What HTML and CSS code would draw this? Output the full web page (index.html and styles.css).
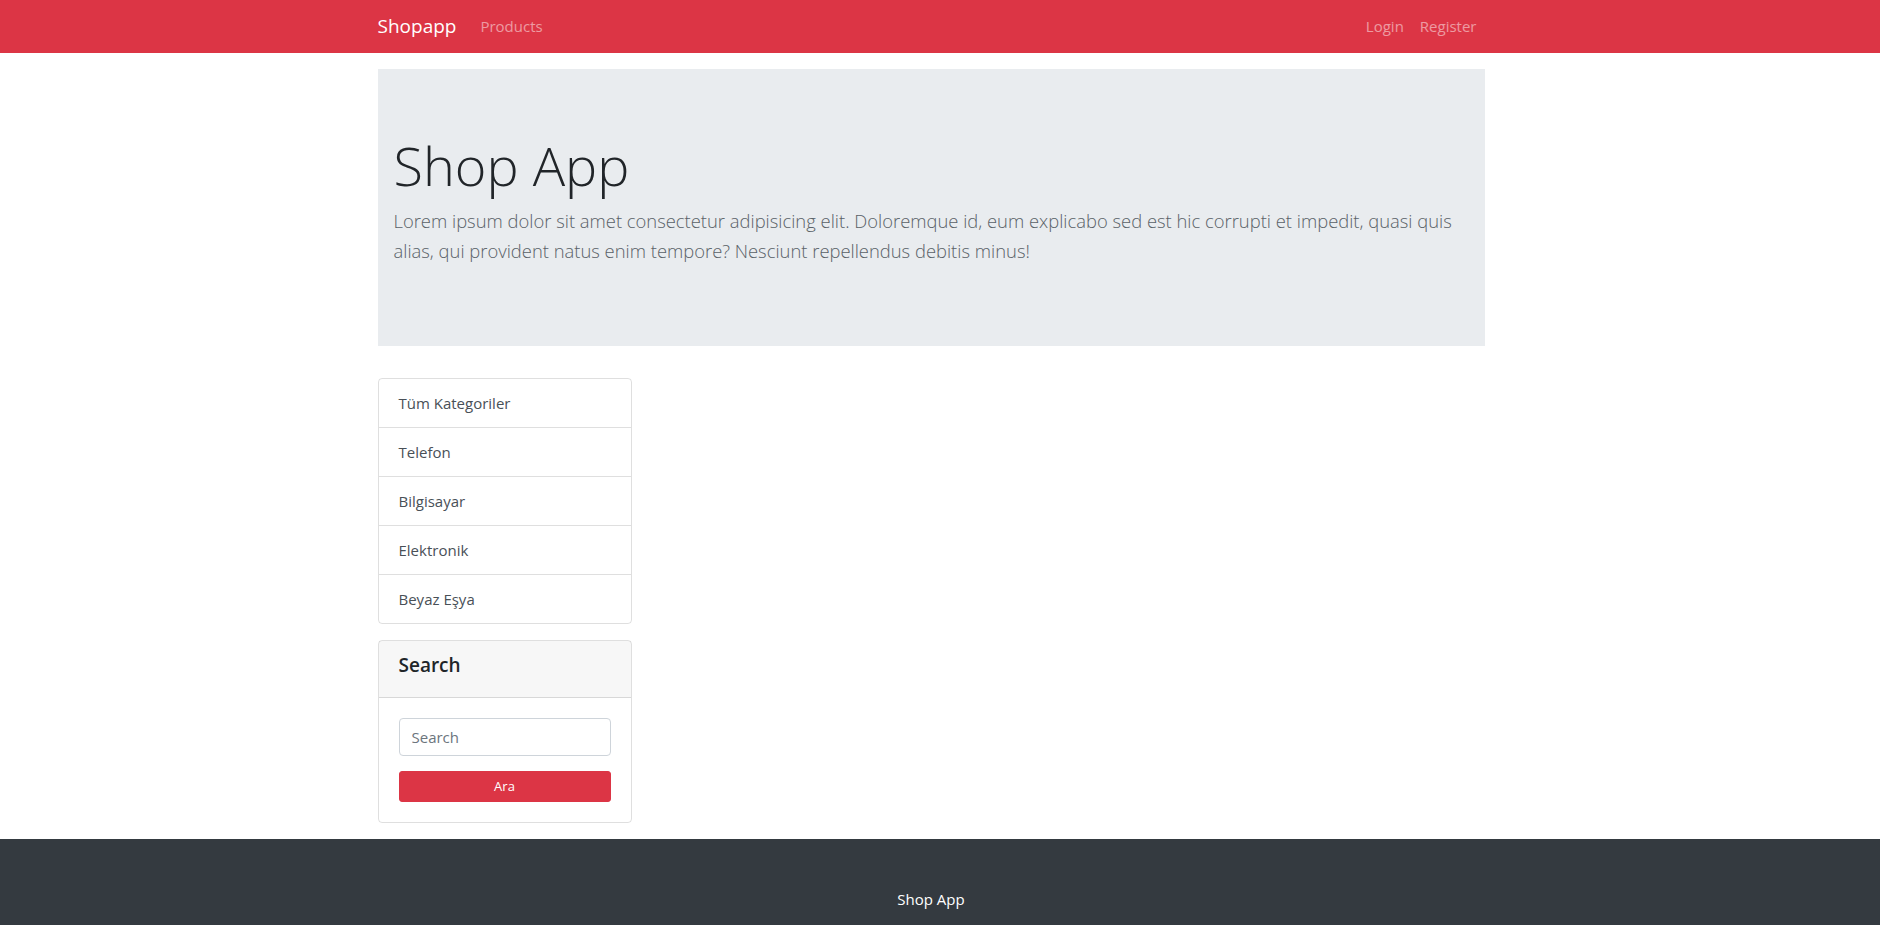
FILE: index.html
```html
<!DOCTYPE html>
<html lang="tr">
<head>
<meta charset="utf-8">
<title>Shopapp</title>
<link rel="stylesheet" href="styles.css">
</head>
<body>
<nav class="navbar">
  <div class="container navbar-inner">
    <a class="brand" href="#">Shopapp</a>
    <ul class="nav nav-main">
      <li><a class="nav-link" href="#">Products</a></li>
    </ul>
    <ul class="nav nav-right">
      <li><a class="nav-link" href="#">Login</a></li>
      <li><a class="nav-link" href="#">Register</a></li>
    </ul>
  </div>
</nav>

<main class="container">
  <section class="jumbotron">
    <h1 class="display">Shop App</h1>
    <p class="lead">Lorem ipsum dolor sit amet consectetur adipisicing elit. Doloremque id, eum explicabo sed est hic corrupti et impedit, quasi quis alias, qui provident natus enim tempore? Nesciunt repellendus debitis minus!</p>
  </section>

  <div class="row">
    <aside class="sidebar">
      <div class="list-group">
        <a class="list-item" href="#">Tüm Kategoriler</a>
        <a class="list-item" href="#">Telefon</a>
        <a class="list-item" href="#">Bilgisayar</a>
        <a class="list-item" href="#">Elektronik</a>
        <a class="list-item" href="#">Beyaz Eşya</a>
      </div>

      <div class="card">
        <div class="card-header">
          <h5 class="card-title">Search</h5>
        </div>
        <div class="card-body">
          <form class="search-form">
            <input class="form-control" type="text" placeholder="Search">
            <button class="btn-search" type="button">Ara</button>
          </form>
        </div>
      </div>
    </aside>
    <section class="content"></section>
  </div>
</main>

<footer class="footer">
  <div class="container footer-inner">Shop App</div>
</footer>
</body>
</html>
```

FILE: styles.css
```css
html {
  overflow-y: scroll;
}
* {
  box-sizing: border-box;
}
body {
  margin: 0;
  font-family: "Open Sans", "Noto Sans", sans-serif;
  font-size: 16px;
  line-height: 1.5;
  color: #212529;
  background: #fff;
}
a {
  text-decoration: none;
}
/* centred as in a window with a scrollbar gutter */
.container {
  width: 1137px;
  margin-left: calc(50% - 577.5px);
  margin-right: auto;
  padding: 0 15px;
}

/* navbar */
.navbar {
  background: #dc3545;
  padding: 6px 0 7px;
}
.navbar-inner {
  display: flex;
  align-items: center;
}
.brand {
  color: #fff;
  font-size: 19px;
  line-height: 30px;
  padding: 5px 0;
  margin-right: 16px;
}
.nav {
  display: flex;
  list-style: none;
  margin: 0;
  padding: 0;
}
.nav-right {
  margin-left: auto;
}
.nav-link {
  display: block;
  padding: 8px 8px;
  font-size: 15px;
  color: rgba(255, 255, 255, 0.5);
}

/* jumbotron */
.jumbotron {
  background: #e9ecef;
  margin-top: 16px;
  margin-bottom: 32px;
  padding: 64px 16px;
}
.display {
  margin: 0 0 8px;
  font-size: 54px;
  font-weight: 300;
  line-height: 1.2;
  color: #212529;
}
.lead {
  margin: 0 0 16px;
  font-size: 18.4px;
  font-weight: 300;
  line-height: 30px;
  color: #5a6268;
}

/* layout */
.row {
  display: flex;
}
.sidebar {
  width: 254px;
  flex: 0 0 254px;
}
.content {
  flex: 1;
}

/* list group */
.list-group {
  display: flex;
  flex-direction: column;
  border: 1px solid rgba(0, 0, 0, 0.125);
  border-radius: 4px;
}
.list-item {
  display: block;
  padding: 12px 20px;
  font-size: 15px;
  line-height: 24px;
  color: #495057;
  border-top: 1px solid rgba(0, 0, 0, 0.125);
}
.list-item:first-child {
  border-top: 0;
}

/* card */
.card {
  margin-top: 16px;
  border: 1px solid rgba(0, 0, 0, 0.125);
  border-radius: 4px;
}
.card-header {
  background: rgba(0, 0, 0, 0.03);
  border-bottom: 1px solid rgba(0, 0, 0, 0.125);
  padding: 12px 20px;
}
.card-title {
  margin: 0 0 8px;
  font-size: 19px;
  font-weight: 600;
  line-height: 24px;
  color: #212529;
}
.card-body {
  padding: 20px;
}
.search-form {
  display: flex;
  flex-direction: column;
  gap: 15px;
}
.form-control {
  height: 38px;
  padding: 6px 12px;
  font-family: inherit;
  font-size: 15px;
  color: #495057;
  border: 1px solid #ced4da;
  border-radius: 4px;
}
.form-control::placeholder {
  color: #6c757d;
}
.btn-search {
  height: 31px;
  padding: 4px 8px;
  font-family: inherit;
  font-size: 13px;
  line-height: 21px;
  color: #fff;
  background: #dc3545;
  border: 1px solid #dc3545;
  border-radius: 3px;
}

/* footer */
.footer {
  margin-top: 16px;
  background: #343a40;
  color: #fff;
  padding: 48px 0;
}
.footer-inner {
  text-align: center;
  font-size: 15px;
  line-height: 24px;
}
```
